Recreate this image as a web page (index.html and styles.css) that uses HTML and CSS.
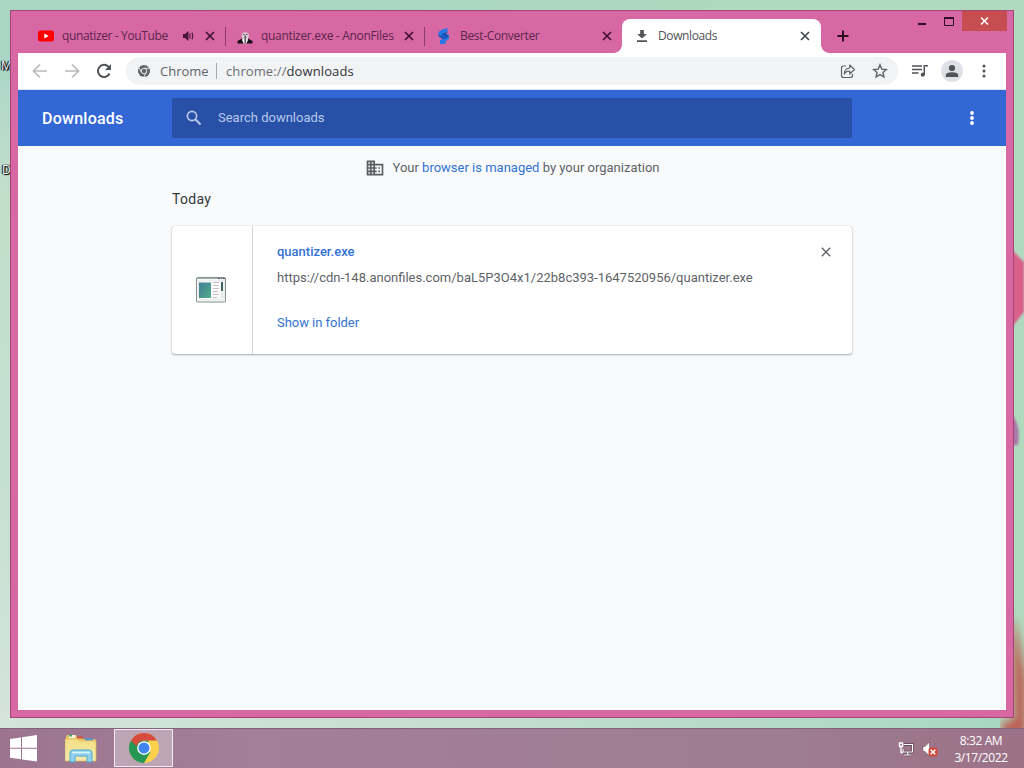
FILE: index.html
```html
<!DOCTYPE html>
<html lang="en">
<head>
<meta charset="utf-8">
<title>Downloads</title>
<link rel="stylesheet" href="styles.css">
</head>
<body>
<div class="desktop">
  <svg class="wallpaper" width="1024" height="768" viewBox="0 0 1024 768">
    <defs>
      <filter id="soft" x="-50%" y="-50%" width="200%" height="200%"><feGaussianBlur stdDeviation="1"/></filter>
      <filter id="haze" x="-100%" y="-50%" width="300%" height="200%"><feGaussianBlur stdDeviation="5"/></filter>
    </defs>
    <path d="M1012 250l12 12v50l-12 15z" fill="#d9618b" filter="url(#soft)"/>
    <path d="M1012 415q9 10 6 30h-6z" fill="#a978a6" filter="url(#soft)"/>
    <path d="M1012 615q7 20 14 65v55h-24v-14h12z" fill="#bb5a50" filter="url(#haze)"/>
  </svg>
  <span class="shortcut shortcut-m">M</span>
  <span class="shortcut shortcut-d">D</span>

  <div class="window">
    <header class="tabstrip">
      <div class="tab tab-first">
        <svg class="favicon" viewBox="0 0 16 16"><rect y="2.5" width="16" height="11" rx="2.500" fill="#f00"/><path d="M6.300 5.500v5L10.700 8z" fill="#fff"/></svg>
        <span class="tab-title t-youtube">qunatizer - YouTube</span>
        <svg class="sound" viewBox="0 0 12 12"><path d="M0 4h2L5.500 1v10L2 8H0z" fill="#4a153b"/><path d="M7 3.500v5M9 2.500q1.600 3.500 0 7" stroke="#4a153b" stroke-width="1.100" fill="none"/></svg>
        <svg class="close" viewBox="0 0 10 10"><path d="M1 1l8 8M9 1l-8 8"/></svg>
      </div>
      <div class="tab">
        <svg class="favicon" viewBox="0 0 16 16"><path d="M.5 15.500v-2.500l4.500-2.500h6l4.500 2.500v2.500z" fill="#170e17"/><path d="M6 9h4.500l.5 3-1.500 3.500h-3L5 12z" fill="#f2edf1"/><path d="M4.500 8q0-3 2-3.500h3.500q2 1 2 3.500l-1.500 3H6z" fill="#d8ced5"/><path d="M6 6.500h1.500M9 6.500h1.500" stroke="#54434f" stroke-width="1.200"/><path d="M7.600 7.500h1.200v7.500H7.600z" fill="#44323f"/></svg>
        <span class="tab-title t-anon">quantizer.exe - AnonFiles</span>
        <svg class="close" viewBox="0 0 10 10"><path d="M1 1l8 8M9 1l-8 8"/></svg>
      </div>
      <div class="tab tab-third">
        <svg class="favicon" viewBox="0 0 16 16"><path d="M11.500 0v4L7 5l6 2v4l-3.500 2.500V16H4v-4l4-1.500L2.500 8V4L6 1.500z" fill="#2678e5"/><path d="M2.500 6.500L8 9h4l-4 2.200-4.500-2zM7 5l5-1-2 2 3 2-2 1.500-5-2.500z" fill="#1550b0"/></svg>
        <span class="tab-title t-best">Best-Converter</span>
        <svg class="close" viewBox="0 0 10 10"><path d="M1 1l8 8M9 1l-8 8"/></svg>
      </div>
      <div class="tab tab-active">
        <svg class="favicon" viewBox="0 0 16 16"><path d="M6.200 2h3.600v4h3L8 10.500 3.200 6h3zM3 12.300h10v1.700H3z" fill="#505357"/></svg>
        <span class="tab-title t-down">Downloads</span>
        <svg class="close" viewBox="0 0 10 10"><path d="M1 1l8 8M9 1l-8 8"/></svg>
      </div>
      <svg class="newtab" viewBox="0 0 12 12"><path d="M6 .5v11M.5 6h11" stroke="#2d0c24" stroke-width="2"/></svg>
      <div class="controls">
        <svg class="minimize" viewBox="0 0 8 2"><path d="M0 1h8" stroke="#300d27" stroke-width="2"/></svg>
        <svg class="maximize" viewBox="0 0 10 9"><path d="M.5 1v7.500h9V1" stroke="#300d27" fill="none"/><path d="M0 1h10" stroke="#300d27" stroke-width="2"/></svg>
        <div class="win-close"><svg width="9" height="8" viewBox="0 0 9 8"><path d="M1 .5l7 7M8 .5l-7 7" stroke="#fff" stroke-width="1.500"/></svg></div>
      </div>
    </header>

    <nav class="toolbar">
      <svg class="nav-icon" viewBox="0 0 16 16"><path d="M15 8H2M8 1.500L1.500 8 8 14.500" stroke="#b9babc" stroke-width="1.700" fill="none"/></svg>
      <svg class="nav-icon" viewBox="0 0 16 16"><path d="M1 8h13M8 1.500L14.500 8 8 14.500" stroke="#b9babc" stroke-width="1.700" fill="none"/></svg>
      <svg class="nav-icon" viewBox="0 0 16 16"><path d="M13.600 10.500A6.100 6.100 0 1 1 12.500 3.800L14 5.300" stroke="#505357" stroke-width="2" fill="none"/><path d="M15 1v6H9z" fill="#505357"/></svg>
      <div class="omnibox">
        <svg class="chrome-mono" viewBox="0 0 24 24"><circle cx="12" cy="12" r="12" fill="#606367"/><circle cx="12" cy="12" r="5.500" fill="none" stroke="#f1f3f4" stroke-width="1.800"/><path d="M12 6.500h11M7.200 14.700L1.800 5.300M16.800 14.700L11.500 24" stroke="#f1f3f4" stroke-width="1.800"/></svg>
        <span class="scheme">Chrome</span><i class="omni-rule"></i>
        <span class="url"><em>chrome://</em>downloads</span>
        <svg class="share" viewBox="0 0 16 16"><path d="M6 3H3.500Q1.500 3 1.500 5v7.500q0 2 2 2h7q2 0 2-2V11" fill="none" stroke="#606367" stroke-width="1.200"/><path d="M4.200 11q.3-5.500 5.500-6V2l4.800 4.500L9.700 11V8Q6 8 4.200 11z" fill="none" stroke="#606367" stroke-width="1.200" stroke-linejoin="round"/></svg>
        <svg class="star" viewBox="0 0 16 16"><path d="M8 1.800l1.800 4.300 4.600.4-3.500 3 1.100 4.500L8 11.600 4 14l1.100-4.500-3.500-3 4.600-.4z" fill="none" stroke="#5a5d61" stroke-width="1.300"/></svg>
      </div>
      <svg class="queue" viewBox="0 0 16 14"><path d="M0 2h10M0 5.500h10M0 9h6.500" stroke="#505357" stroke-width="1.400"/><path d="M12.300 10.500V1.800H16" stroke="#505357" stroke-width="1.500" fill="none"/><circle cx="10.800" cy="10.700" r="2.100" fill="#505357"/></svg>
      <svg class="profile" viewBox="0 0 22 22"><circle cx="11" cy="11" r="11" fill="#dee0e5"/><circle cx="11" cy="8" r="3.100" fill="#505357"/><path d="M4.800 17v-1.500q0-3.200 6.200-3.200t6.200 3.200V17z" fill="#505357"/></svg>
      <svg class="kebab" viewBox="0 0 4 14"><g fill="#505357"><circle cx="2" cy="2" r="1.500"/><circle cx="2" cy="7" r="1.500"/><circle cx="2" cy="12" r="1.500"/></g></svg>
    </nav>

    <main class="page">
      <div class="page-header">
        <h1>Downloads</h1>
        <div class="search">
          <svg width="16" height="16" viewBox="0 0 16 16"><circle cx="6" cy="6" r="4.600" fill="none" stroke="#b7c9ed" stroke-width="1.700"/><path d="M9.300 9.300l5.200 5.200" stroke="#b7c9ed" stroke-width="2"/></svg>
          <span>Search downloads</span>
        </div>
        <svg class="page-menu" viewBox="0 0 4 14"><g fill="#fff"><circle cx="2" cy="2" r="1.900"/><circle cx="2" cy="7" r="1.900"/><circle cx="2" cy="12" r="1.900"/></g></svg>
      </div>
      <div class="managed">
        <svg width="20" height="20" viewBox="0 0 24 24"><path fill="#5a5d61" d="M12 7V3H2v18h20V7H12zM6 19H4v-2h2v2zm0-4H4v-2h2v2zm0-4H4V9h2v2zm0-4H4V5h2v2zm4 12H8v-2h2v2zm0-4H8v-2h2v2zm0-4H8V9h2v2zm0-4H8V5h2v2zm10 12h-8v-2h2v-2h-2v-2h2v-2h-2V9h8v10zm-2-8h-2v2h2v-2zm0 4h-2v2h2v-2z"/></svg>
        <span class="managed-text">Your <a>browser is managed</a> by your organization</span>
      </div>
      <section class="downloads">
        <h2>Today</h2>
        <article class="card">
          <div class="file-icon">
            <svg width="32" height="26" viewBox="0 0 32 26">
              <defs><linearGradient id="thumb" x2="1" y2="1"><stop stop-color="#3f7d9b"/><stop offset="1" stop-color="#52ab86"/></linearGradient></defs>
              <rect x="1.500" y=".5" width="29" height="24.500" rx="1" fill="#f4f5f5" stroke="#84908f"/>
              <path d="M2 1.500h28" stroke="#a3b2b5"/><path d="M23 1.500h2M26 1.500h1M28 1.500h2" stroke="#4c6064"/>
              <rect x="3.500" y="4" width="25.500" height="18.500" fill="#fbfbfb" stroke="#d7dada" stroke-width=".5"/>
              <rect x="4" y="5.500" width="12" height="15.500" fill="url(#thumb)"/>
              <path d="M18 5.500h6M18 8.500h5M18 11.500h6M18 14.500h5M18 17.500h6M18 20.500h4" stroke="#cdbdc0"/>
              <path d="M27 5v9" stroke="#3d6662" stroke-width="2"/><path d="M27 15v6" stroke="#e3e7e7" stroke-width="2"/>
            </svg>
          </div>
          <div class="details">
            <div class="name-row"><a class="filename">quantizer.exe</a>
              <svg width="10" height="10" viewBox="0 0 10 10"><path d="M.8.8l8.400 8.400M9.200.8L.8 9.200" stroke="#5f6368" stroke-width="1.400"/></svg>
            </div>
            <div class="source">https://cdn-148.anonfiles.com/baL5P3O4x1/22b8c393-1647520956/quantizer.exe</div>
            <a class="show">Show in folder</a>
          </div>
        </article>
      </section>
    </main>
  </div>

  <footer class="taskbar">
    <svg class="start" viewBox="0 0 27 27"><path d="M0 4l11-1.600V12.700H0zM12 2.200L27 0v12.700H12zM0 13.800h11v10.500L0 22.700zM12 13.800h15V26.500l-15-2z" fill="#fff"/></svg>
    <svg class="explorer" viewBox="0 0 32 29">
      <defs><linearGradient id="folder" x2="0" y2="1"><stop stop-color="#f4de83"/><stop offset="1" stop-color="#f5eab0"/></linearGradient></defs>
      <path d="M1 3l1-2h9l1 2h4l1 2h13l1 2v19H1z" fill="#e6c86c"/><path d="M4 1h6v3H4z" fill="#fff9df"/><path d="M4 1.500h3" stroke="#3aa55b" stroke-width="2"/><path d="M12 3.500h6" stroke="#d65138" stroke-width="2"/><path d="M20 5.500h8" stroke="#4a9bd4" stroke-width="2"/>
      <path d="M0 5h12l2 2h17v20H0z" fill="url(#folder)" stroke="#dfbd5a" stroke-width=".7"/>
      <path d="M5 28V19q0-3 3-3h16q3 0 3 3v9h-5v-6H10v6z" fill="#92d2ed" stroke="#4fa9d2"/><path d="M7 18.500h18" stroke="#d9f5fc" stroke-width="1.500"/>
    </svg>
    <div class="running">
      <svg width="30" height="30" viewBox="0 0 48 48"><circle cx="24" cy="24" r="24" fill="#fbd04b"/><path d="M3.200 12A24 24 0 0 0 24 48l10.400-18L24 24z" fill="#269653"/><path d="M3.200 12l10.400 18L24 24l8-12z" fill="#269653"/><path d="M3.200 12A24 24 0 0 1 44.800 12H24Q15 12 12 21z" fill="#d84b3f"/><circle cx="24" cy="24" r="11" fill="#fff"/><circle cx="24" cy="24" r="8.800" fill="#4285ec"/></svg>
    </div>
    <div class="tray">
      <svg class="network" viewBox="0 0 16 16"><path d="M6 3.500h8.500v7.500H5V8M9.700 11v2.500M6 14h7" stroke="#5a4052" stroke-width="2.600" fill="none"/><path d="M5.500 3.500h9v7.500H5V8M9.700 11v2.500M6 14h7" stroke="#fff" stroke-width="1.200" fill="none"/><path d="M1.500 2v3.500h3V2zM3 5.500v6h2" stroke="#fff" stroke-width="1.300" fill="none"/></svg>
      <svg class="muted" viewBox="0 0 16 16"><path d="M1 5.500h2L7.500 1v14L3 10.500H1z" fill="#fff" stroke="#654657" stroke-width=".5"/><rect x="6.500" y="6.500" width="9" height="9" rx="2.500" fill="#d34d3d"/><path d="M8.700 8.700l4.600 4.600M13.300 8.700l-4.600 4.600" stroke="#fff" stroke-width="1.500"/></svg>
      <div class="clock"><span class="time">8:32 AM</span><span class="date">3/17/2022</span></div>
    </div>
  </footer>
</div>
</body>
</html>
```
FILE: styles.css
```css
* { box-sizing: border-box; }
body { margin: 0; overflow: hidden; }
svg { display: block; flex: none; }
h1, h2 { margin: 0; }

.desktop {
  position: relative; width: 1024px; height: 768px; overflow: hidden;
  display: flex; flex-direction: column; justify-content: flex-end;
  background: linear-gradient(90deg, #a9d5c5, #abd8bf 50%, #b0dabe);
  font-family: "Open Sans", "Noto Sans", sans-serif;
}
.desktop::before { content: ""; position: absolute; left: 0; top: 80px; width: 12px; height: 648px; background: linear-gradient(#afd7ca, #c2dfc9 18%, #c4e0d0 60%, #d5e4dc); }
.desktop::after { content: ""; position: absolute; left: 0; top: 718px; width: 1000px; height: 10px; background: linear-gradient(90deg, #d3e4dc, #c9dfd0 40%, #a8d8c2); }
.wallpaper { position: absolute; left: 0; top: 0; }
.shortcut { position: absolute; font-size: 12px; line-height: 16px; color: #fff; text-shadow: 0 0 1px #000, 1px 1px 1px #000, -1px 0 1px #000, 1px 0 1px #000; }
.shortcut-m { left: 1px; top: 58px; }
.shortcut-d { left: 2px; top: 162px; }

.window {
  position: absolute; left: 10px; top: 10px; width: 1004px; height: 708px;
  display: flex; flex-direction: column;
  padding: 0 7px 7px; border: 1px solid #a44474; background: #d868a4;
}
.tabstrip { height: 42px; flex: none; display: flex; padding: 8px 0 0 8px; }
.tab { position: relative; width: 199px; height: 34px; display: flex; align-items: center; padding: 0 10px 0 12px; }
.tab:not(.tab-active)::after { content: ""; position: absolute; right: -1px; top: 8px; width: 1px; height: 19px; background: #8d3b6b; }
.tab.tab-third { width: 198px; }
.tab.tab-third::after { display: none; }
.tab.tab-active { background: #fff; border-radius: 8px 8px 0 0; padding-right: 11px; }
.tab-active::before, .tab-active::after { content: ""; position: absolute; bottom: 0; width: 8px; height: 8px; }
.tab-active::before { left: -8px; background: radial-gradient(circle at 0 0, transparent 7.5px, #fff 8px); }
.tab-active::after { right: -8px; background: radial-gradient(circle at 100% 0, transparent 7.5px, #fff 8px); }
.favicon { width: 16px; height: 16px; margin-right: 8px; }
.tab-title { flex: 1; white-space: nowrap; font-size: 12px; line-height: 16px; color: #5a264c; }
.t-youtube { letter-spacing: -.36px; }
.t-anon { letter-spacing: -.32px; }
.t-best { letter-spacing: -.33px; }
.t-down { letter-spacing: -.38px; }
.tab-active .tab-title { color: #505357; }
.sound { width: 12px; height: 12px; margin-right: 10px; }
.close { width: 10px; height: 10px; fill: none; stroke: #3d1131; stroke-width: 1.7; }
.tab-active .close { stroke: #45484c; }
.newtab { width: 12px; height: 12px; margin: 11px 0 0 16px; }
.controls { display: flex; height: 20px; margin: -8px -1px 0 auto; align-items: flex-start; }
.minimize { width: 8px; height: 2px; margin: 12px 18px 0 0; }
.maximize { width: 10px; height: 9px; margin: 6px 8px 0 0; }
.win-close { width: 45px; height: 20px; background: #c64e50; display: flex; align-items: center; justify-content: center; }

.toolbar { height: 37px; flex: none; display: flex; align-items: center; background: #fff; padding: 0 20px 0 14px; border-bottom: 1px solid #e2e7ee; }
.nav-icon { width: 16px; height: 16px; margin-right: 16px; }
.nav-icon:nth-child(3) { margin-right: 14px; }
.omnibox { flex: 1; height: 28px; border-radius: 14px; background: #f2f3f5; display: flex; align-items: center; padding: 0 10px 0 12px; font-size: 13px; color: #606367; white-space: nowrap; }
.chrome-mono { width: 12px; height: 12px; margin-right: 10px; }
.scheme { width: 56px; }
.omni-rule { width: 1px; height: 16px; background: #a5a8ac; margin-right: 9px; }
.url { flex: 1; color: #303236; letter-spacing: .1px; }
.url em { font-style: normal; color: #6b6e73; }
.share { width: 16px; height: 16px; margin-right: 16px; }
.star { width: 16px; height: 16px; }
.queue { width: 16px; height: 14px; margin: 0 13px 0 14px; }
.profile { width: 22px; height: 22px; margin-right: 19px; }
.kebab { width: 4px; height: 14px; }

.page { flex: 1; background: #f8fafc; font-family: Roboto, sans-serif; }
.page-header { height: 56px; display: flex; align-items: center; background: #3367d6; padding: 0 32px 0 24px; color: #fff; }
h1 { width: 130px; font-size: 16px; font-weight: 500; letter-spacing: .25px; }
.search { width: 680px; height: 40px; border-radius: 2px; background: #2850a7; display: flex; align-items: center; padding: 0 0 1px 14px; gap: 16px; font-size: 13px; color: #b7c9ed; }
.page-menu { width: 4px; height: 14px; margin-left: auto; }
.managed { height: 44px; display: flex; align-items: center; justify-content: center; gap: 8px; font-size: 13px; color: #5f6368; }
.managed-text { padding-bottom: 2px; }
.managed a, .details a { color: #3373d3; }
.downloads { width: 680px; margin: 0 auto; }
h2 { height: 36px; line-height: 18px; font-size: 14px; font-weight: 400; color: #35373a; letter-spacing: .3px; }
.card { height: 128px; display: flex; background: #fff; border-radius: 3px; box-shadow: 0 1px 2px rgba(60,64,67,.4), 0 0 1px rgba(60,64,67,.4); }
.file-icon { width: 81px; padding: 51px 0 0 23px; border-right: 1px solid #d2d4d6; }
.details { flex: 1; padding: 18px 21px 0 24px; font-size: 13px; line-height: 16px; }
.name-row { display: flex; align-items: center; justify-content: space-between; }
.filename { font-weight: 500; }
.source { margin-top: 10px; color: #606367; white-space: nowrap; }
.show { display: block; margin-top: 29px; letter-spacing: -.04px; }

.taskbar { position: relative; height: 40px; display: flex; align-items: center; padding-left: 10px; border-top: 1px solid #80637a; background: linear-gradient(90deg, #9c748f, #a37f98 25%, #9e7d92 75%, #9c7187); }
.start { width: 27px; height: 27px; }
.explorer { width: 32px; height: 29px; margin-left: 28px; }
.running { width: 59px; height: 38px; margin-left: 17px; margin-bottom: 1px; border: 1px solid #f3e9f1; background: #bda5b6; display: flex; align-items: center; justify-content: center; }
.tray { display: flex; align-items: center; margin-left: auto; padding-right: 16px; color: #fff; }
.network { width: 16px; height: 16px; margin-right: 8px; }
.muted { width: 16px; height: 16px; margin-right: 16px; }
.clock { width: 54px; display: flex; flex-direction: column; align-items: center; font-size: 12px; line-height: 17px; letter-spacing: -.4px; white-space: nowrap; }
```
